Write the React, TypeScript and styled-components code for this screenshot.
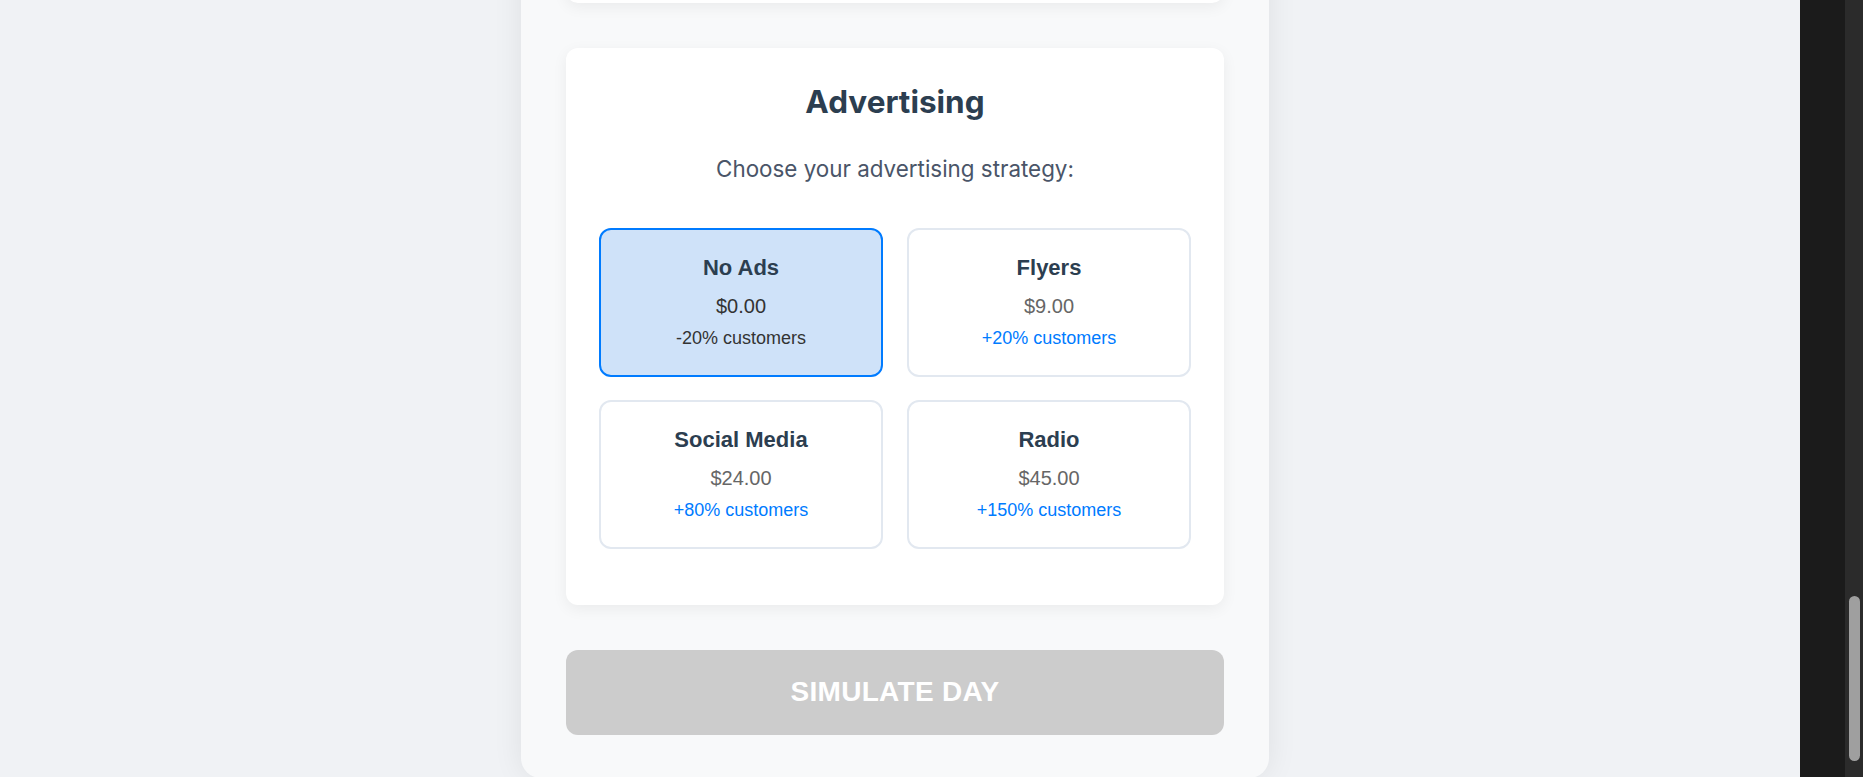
import React from "react";
import styled, { createGlobalStyle } from "styled-components";

const GlobalStyle = createGlobalStyle`
  html, body {
    margin: 0;
    padding: 0;
    height: 777px;
    overflow: hidden;
    background: #f0f2f5;
  }
  * { box-sizing: border-box; }
`;

const Shell = styled.div`
  display: flex;
  width: 1863px;
  height: 777px;
  overflow: hidden;
`;

const Main = styled.main`
  flex: 1;
  display: flex;
  justify-content: center;
  padding-right: 10px;
  background: #f0f2f5;
`;

const Container = styled.div`
  width: 748px;
  margin-top: -155px;
  align-self: flex-start;
  display: flex;
  flex-direction: column;
  gap: 45px;
  padding: 0 45px 43px;
  background: #f8f9fa;
  border-radius: 0 0 20px 20px;
  box-shadow: 0 0 30px rgba(0, 0, 0, 0.08);
`;

const Section = styled.section<{ $height?: number }>`
  background: #ffffff;
  border-radius: 12px;
  padding: 33px 33px 33px;
  box-shadow: 0 4px 15px rgba(0, 0, 0, 0.06);
  ${(p) => (p.$height ? `height: ${p.$height}px;` : "")}
`;

const Title = styled.h2`
  margin: 2px 0 34px;
  font-family: Inter, "Liberation Sans", sans-serif;
  font-size: 31.5px;
  font-weight: 700;
  line-height: 38px;
  color: #2c3e50;
  text-align: center;
`;

const Subtitle = styled.p`
  margin: 0 0 45.5px;
  font-family: Inter, "Liberation Sans", sans-serif;
  font-size: 22.4px;
  line-height: 27px;
  color: #4a5568;
  text-align: center;
`;

const OptionGrid = styled.div`
  display: grid;
  grid-template-columns: 1fr 1fr;
  gap: 23px 24px;
  margin-bottom: 23px;
`;

const OptionCard = styled.div<{ $selected?: boolean }>`
  display: flex;
  flex-direction: column;
  align-items: center;
  height: 149px;
  padding: 25px 16px 0;
  border: 2px solid ${(p) => (p.$selected ? "#007bff" : "#e2e8f0")};
  border-radius: 12px;
  background: ${(p) => (p.$selected ? "#cfe2f9" : "#ffffff")};
  font-family: "Liberation Sans", Arial, sans-serif;
  text-align: center;
  cursor: pointer;
`;

const OptionName = styled.div`
  font-size: 22px;
  font-weight: 700;
  line-height: 26px;
  color: #2c3e50;
  margin-bottom: 13px;
`;

const OptionPrice = styled.div<{ $selected?: boolean }>`
  font-size: 20px;
  line-height: 24px;
  color: ${(p) => (p.$selected ? "#333333" : "#666666")};
  margin-bottom: 9px;
`;

const OptionEffect = styled.div<{ $selected?: boolean }>`
  font-size: 18px;
  line-height: 22px;
  color: ${(p) => (p.$selected ? "#333333" : "#007bff")};
`;

const SimulateButton = styled.button`
  height: 85px;
  border: none;
  border-radius: 12px;
  background: #cccccc;
  color: #ffffff;
  font-family: "Liberation Sans", Arial, sans-serif;
  font-size: 28px;
  font-weight: 700;
  letter-spacing: 0.3px;
  text-transform: uppercase;
  cursor: not-allowed;
`;

const SidePanel = styled.aside`
  width: 63px;
  display: flex;
  background: #1b1b1b;
`;

const SideFill = styled.div`
  flex: 1;
`;

const ScrollTrack = styled.div`
  width: 18px;
  background: #2b2b2b;
  display: flex;
  flex-direction: column;
  justify-content: flex-end;
  align-items: center;
  padding-bottom: 16px;
`;

const ScrollThumb = styled.div`
  width: 11px;
  height: 165px;
  border-radius: 6px;
  background: #9f9f9f;
`;

const options = [
  { name: "No Ads", price: "$0.00", effect: "-20% customers", selected: true },
  { name: "Flyers", price: "$9.00", effect: "+20% customers" },
  { name: "Social Media", price: "$24.00", effect: "+80% customers" },
  { name: "Radio", price: "$45.00", effect: "+150% customers" },
];

export default function App() {
  return (
    <>
      <GlobalStyle />
      <Shell>
        <Main>
          <Container>
            <Section $height={158} />
            <Section>
              <Title>Advertising</Title>
              <Subtitle>Choose your advertising strategy:</Subtitle>
              <OptionGrid>
                {options.map((o) => (
                  <OptionCard key={o.name} $selected={o.selected}>
                    <OptionName>{o.name}</OptionName>
                    <OptionPrice $selected={o.selected}>{o.price}</OptionPrice>
                    <OptionEffect $selected={o.selected}>{o.effect}</OptionEffect>
                  </OptionCard>
                ))}
              </OptionGrid>
            </Section>
            <SimulateButton disabled>Simulate Day</SimulateButton>
          </Container>
        </Main>
        <SidePanel>
          <SideFill />
          <ScrollTrack>
            <ScrollThumb />
          </ScrollTrack>
        </SidePanel>
      </Shell>
    </>
  );
}
